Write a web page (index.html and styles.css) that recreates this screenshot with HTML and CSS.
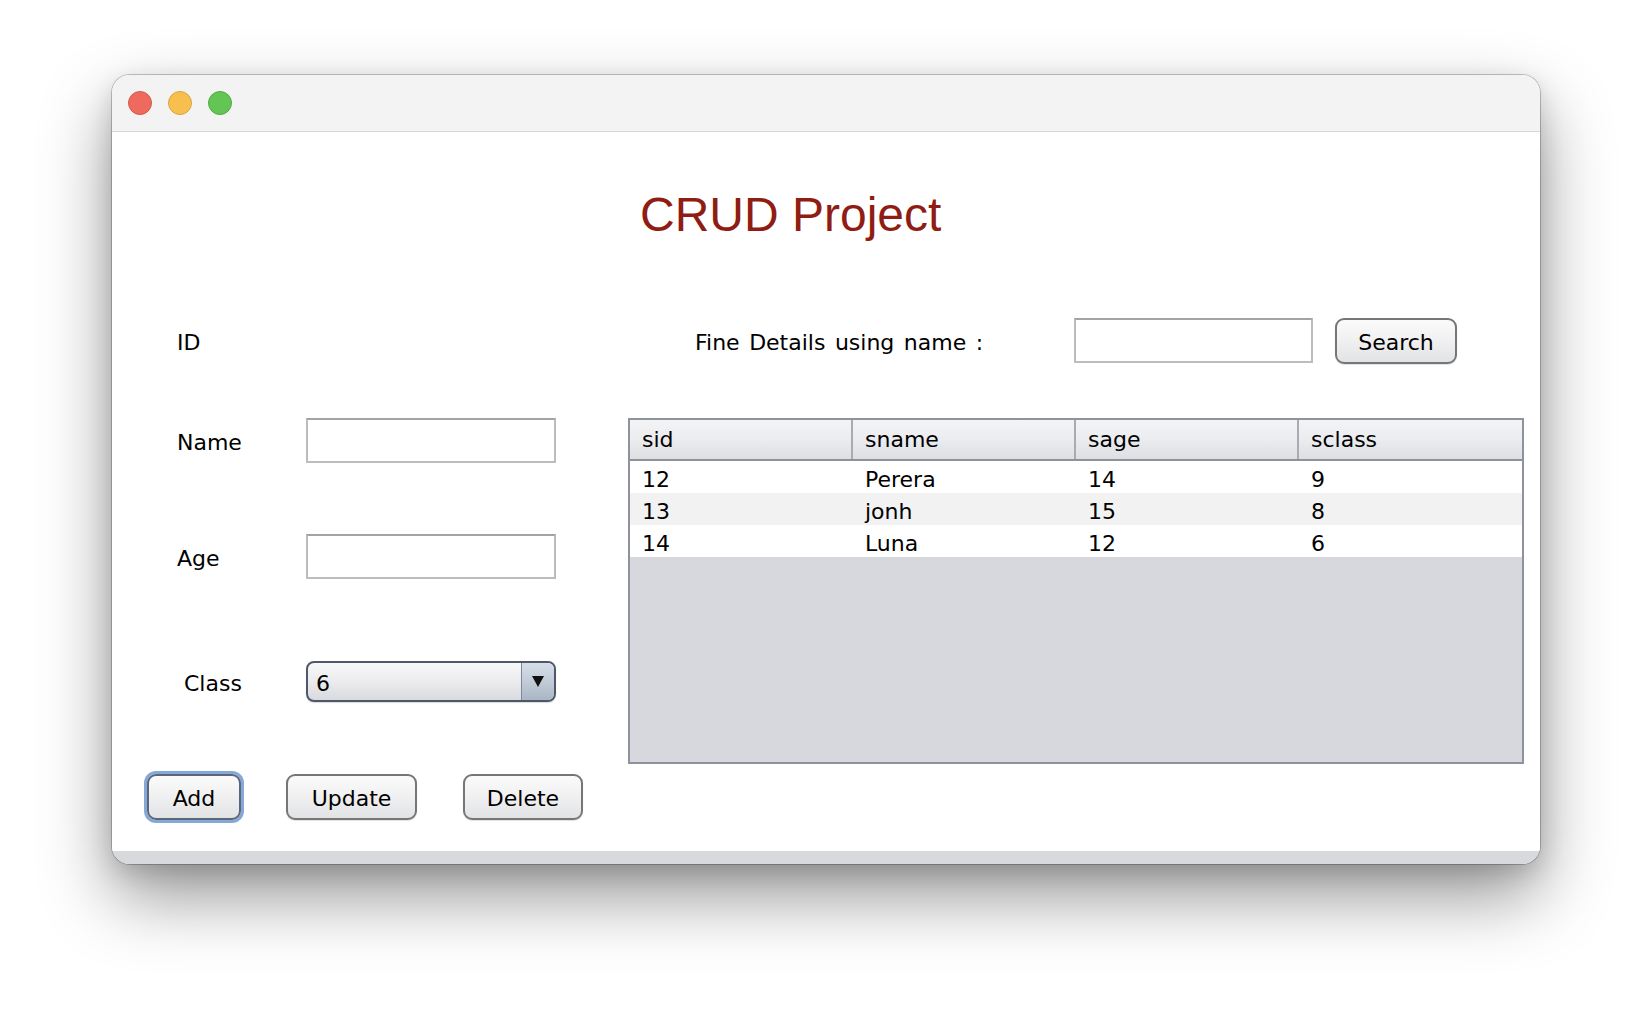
FILE: index.html
```html
<!DOCTYPE html>
<html>
<head>
<meta charset="utf-8">
<title>CRUD Project</title>
<link rel="stylesheet" href="styles.css">
</head>
<body>
<div class="window">
  <div class="titlebar">
    <span class="light red"></span>
    <span class="light yellow"></span>
    <span class="light green"></span>
  </div>
  <div class="content">
    <div class="title">CRUD Project</div>
    <div class="search-row">
      <div class="id-label">ID</div>
      <div class="find-label">Fine Details using name :</div>
      <div class="field search-field"></div>
      <div class="btn search-btn">Search</div>
    </div>
    <div class="main">
      <div class="form">
        <div class="frow">
          <div class="flabel">Name</div>
          <div class="field"></div>
        </div>
        <div class="frow age-row">
          <div class="flabel">Age</div>
          <div class="field"></div>
        </div>
        <div class="frow class-row">
          <div class="flabel class-label">Class</div>
          <div class="combo">
            <span class="combo-value">6</span>
            <span class="combo-arrow"><span class="tri"></span></span>
          </div>
        </div>
        <div class="buttons">
          <div class="btn add-btn focused">Add</div>
          <div class="btn update-btn">Update</div>
          <div class="btn delete-btn">Delete</div>
        </div>
      </div>
      <div class="table">
        <div class="thead">
          <div class="th">sid</div>
          <div class="th">sname</div>
          <div class="th">sage</div>
          <div class="th last">sclass</div>
        </div>
        <div class="tr">
          <div class="td">12</div><div class="td">Perera</div><div class="td">14</div><div class="td">9</div>
        </div>
        <div class="tr alt">
          <div class="td">13</div><div class="td">jonh</div><div class="td">15</div><div class="td">8</div>
        </div>
        <div class="tr">
          <div class="td">14</div><div class="td">Luna</div><div class="td">12</div><div class="td">6</div>
        </div>
      </div>
    </div>
  </div>
  <div class="footer"></div>
</div>
</body>
</html>
```

FILE: styles.css
```css
html {
  margin: 0;
  padding: 0;
  height: 1012px;
  background: #ffffff;
}
body {
  margin: 0;
  box-sizing: border-box;
  height: 1012px;
  padding: 75px 0 0 112px;
  font-family: "DejaVu Sans", "Liberation Sans", sans-serif;
  font-size: 22px;
  color: #000;
  background: #ffffff;
}
.window {
  width: 1428px;
  height: 789px;
  border-radius: 18px;
  overflow: hidden;
  display: flex;
  flex-direction: column;
  box-shadow: 0 0 0 1px rgba(0,0,0,0.22), 0 32px 70px rgba(0,0,0,0.42), 0 8px 24px rgba(0,0,0,0.14);
  background: #fff;
}
.titlebar {
  height: 56px;
  flex: 0 0 56px;
  background: #f3f3f3;
  border-bottom: 1px solid #d7d7d7;
  display: flex;
  align-items: center;
  padding-left: 16px;
  gap: 16px;
}
.light {
  width: 22px;
  height: 22px;
  border-radius: 50%;
  box-sizing: content-box;
  border: 1px solid transparent;
}
.red { background: #ee6a5f; border-color: #d5574c; }
.yellow { background: #f6bf4f; border-color: #dba43c; }
.green { background: #62c554; border-color: #4fab41; }

.content {
  flex: 1 1 auto;
  background: #fff;
}
.footer {
  flex: 0 0 13px;
  height: 13px;
  background: #d8d9dd;
}
.title {
  padding-top: 55px;
  padding-left: 528px;
  height: 56px;
  font-family: "Liberation Sans", Arial, sans-serif;
  font-size: 48px;
  line-height: 56px;
  color: #8f1d13;
}
.search-row {
  margin-top: 75px;
  height: 46px;
  display: flex;
  align-items: flex-start;
}
.id-label {
  margin-left: 65px;
  width: 518px;
  line-height: 26px;
  padding-top: 12px;
}
.find-label {
  width: 379px;
  line-height: 26px;
  padding-top: 12px;
  word-spacing: 2.5px;
}
.field {
  box-sizing: border-box;
  width: 250px;
  height: 45px;
  background: #fff;
  border: 2px solid #bdbdbd;
  border-top-color: #a3a3a3;
}
.search-field {
  width: 239px;
}
.btn {
  box-sizing: border-box;
  height: 46px;
  border: 2px solid #767676;
  border-radius: 9px;
  background: linear-gradient(#fbfbfb 0%, #f1f1f2 45%, #e2e3e6 100%);
  display: flex;
  align-items: center;
  justify-content: center;
  line-height: 26px;
  padding-top: 4px;
  box-shadow: 0 1px 1px rgba(0,0,0,0.12);
}
.search-btn {
  margin-left: 22px;
  width: 122px;
}
.main {
  margin-top: 54px;
  display: flex;
  align-items: flex-start;
}
.form {
  margin-left: 31px;
  width: 440px;
}
.frow {
  display: flex;
  align-items: center;
  padding-left: 34px;
  height: 45px;
}
.flabel {
  width: 129px;
  line-height: 26px;
  padding-top: 5px;
}
.class-label {
  width: 122px;
  padding-left: 7px;
}
.age-row {
  margin-top: 71px;
}
.class-row {
  margin-top: 82px;
  height: 41px;
}
.combo {
  box-sizing: border-box;
  width: 250px;
  height: 41px;
  border: 2px solid #4f5868;
  border-radius: 8px;
  display: flex;
  overflow: hidden;
  background: linear-gradient(#f7f7f8 0%, #ececee 50%, #d9dadf 100%);
  box-shadow: 0 1px 1px rgba(0,0,0,0.15);
}
.combo-value {
  flex: 1 1 auto;
  padding-left: 8px;
  line-height: 37px;
  padding-top: 2px;
}
.combo-arrow {
  flex: 0 0 32px;
  border-left: 1px solid #7d8898;
  background: linear-gradient(#d6dee8 0%, #c2ccd8 50%, #aab6c4 100%);
  display: flex;
  align-items: center;
  justify-content: center;
}
.tri {
  width: 0;
  height: 0;
  border-left: 6px solid transparent;
  border-right: 6px solid transparent;
  border-top: 11px solid #111;
  margin-top: -1px;
}
.buttons {
  margin-top: 72px;
  display: flex;
  height: 46px;
}
.add-btn {
  margin-left: 4px;
  width: 94px;
}
.focused {
  border-color: #5b6678;
  box-shadow: 0 0 0 3px #86a8d8;
}
.update-btn {
  margin-left: 45px;
  width: 131px;
}
.delete-btn {
  margin-left: 46px;
  width: 120px;
}
.table {
  margin-left: 45px;
  box-sizing: border-box;
  width: 896px;
  height: 346px;
  border: 2px solid #8e939b;
  background: #d7d8dd;
}
.thead {
  display: grid;
  grid-template-columns: repeat(4, 223px);
  height: 39px;
  border-bottom: 2px solid #8e929a;
  background: linear-gradient(#f4f4f6 0%, #ebecef 50%, #dedfe3 100%);
}
.th {
  box-sizing: border-box;
  padding-left: 12px;
  padding-top: 1px;
  line-height: 38px;
  border-right: 2px solid #a8abb1;
}
.th.last {
  border-right: none;
}
.tr {
  display: grid;
  grid-template-columns: repeat(4, 223px);
  height: 32px;
  background: #ffffff;
}
.tr.alt {
  background: #f2f2f2;
}
.td {
  padding-left: 12px;
  padding-top: 5px;
  line-height: 27px;
}
```
